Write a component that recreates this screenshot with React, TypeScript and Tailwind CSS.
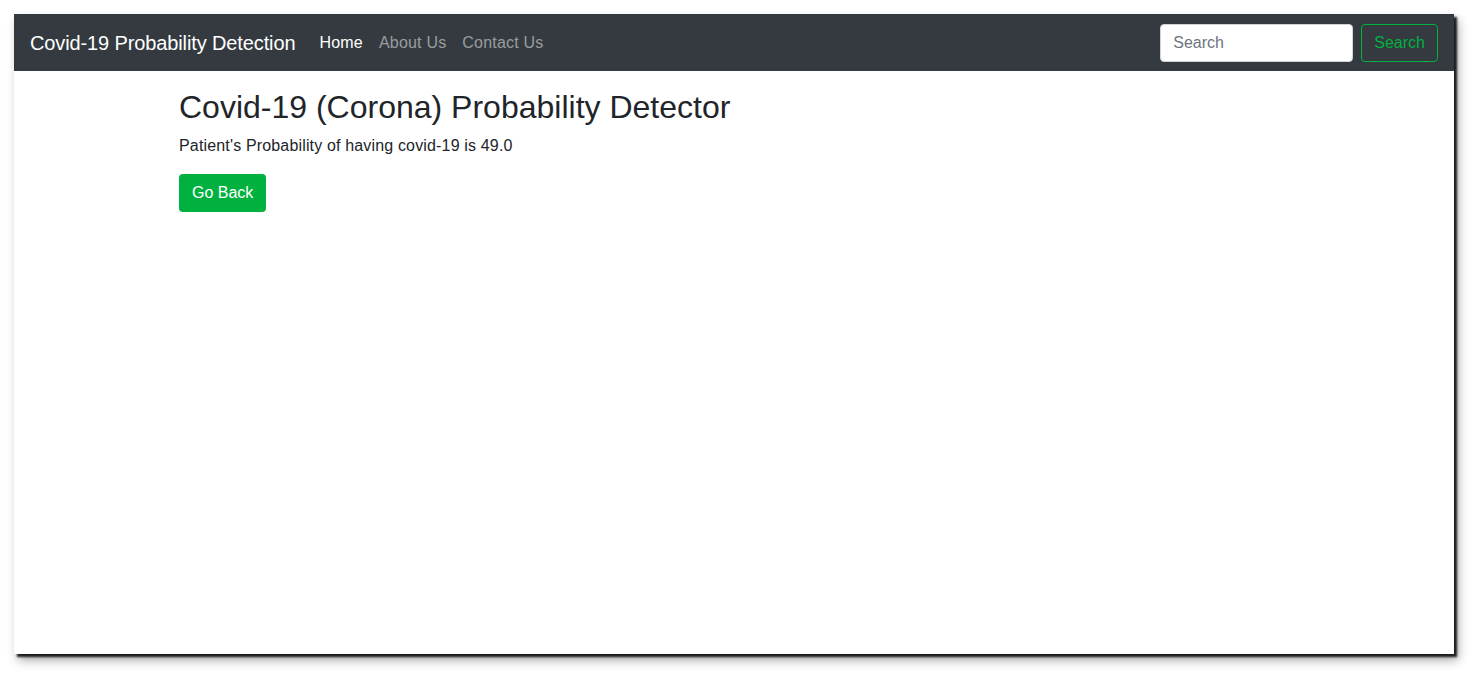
export default function App() {
  return (
    <div className="min-h-[673px] bg-white pt-[14px] pl-[14px] font-['Liberation_Sans',Arial,sans-serif]">
      <div className="flex h-[640px] w-[1440px] flex-col bg-white shadow-[3px_3px_2px_rgba(0,0,0,0.85),4px_6px_10px_rgba(0,0,0,0.35)]">
        {/* Navbar */}
        <nav className="flex h-[57px] items-center bg-[#343a40] px-4 pt-[1px]">
          <a className="mr-4 text-[20px] tracking-[-0.12px] text-white">Covid-19 Probability Detection</a>
          <ul className="flex items-center text-[16px] tracking-[0.2px]">
            <li className="px-2 text-white">Home</li>
            <li className="px-2 text-white/50">About Us</li>
            <li className="px-2 text-white/50">Contact Us</li>
          </ul>
          <form className="ml-auto flex items-center">
            <input
              type="text"
              placeholder="Search"
              className="mr-2 h-[38px] w-[193px] rounded border border-[#ced4da] bg-white px-3 text-[16px] text-[#495057] outline-none placeholder:text-[#6c757d]"
            />
            <button className="h-[38px] rounded border border-[#00b140] px-3 text-[16px] text-[#00b140]">
              Search
            </button>
          </form>
        </nav>

        {/* Content */}
        <div className="mx-auto w-[1140px] px-[15px] pt-[17px]">
          <h2 className="mb-2 text-[32px] leading-[1.2] font-medium text-[#212529]">
            Covid-19 (Corona) Probability Detector
          </h2>
          <p className="mb-4 text-[16px] leading-6 tracking-[0.16px] text-[#212529]">
            Patient's Probability of having covid-19 is 49.0
          </p>
          <button className="h-[38px] rounded bg-[#00b140] px-[13px] text-[16px] text-white">Go Back</button>
        </div>
      </div>
    </div>
  );
}
